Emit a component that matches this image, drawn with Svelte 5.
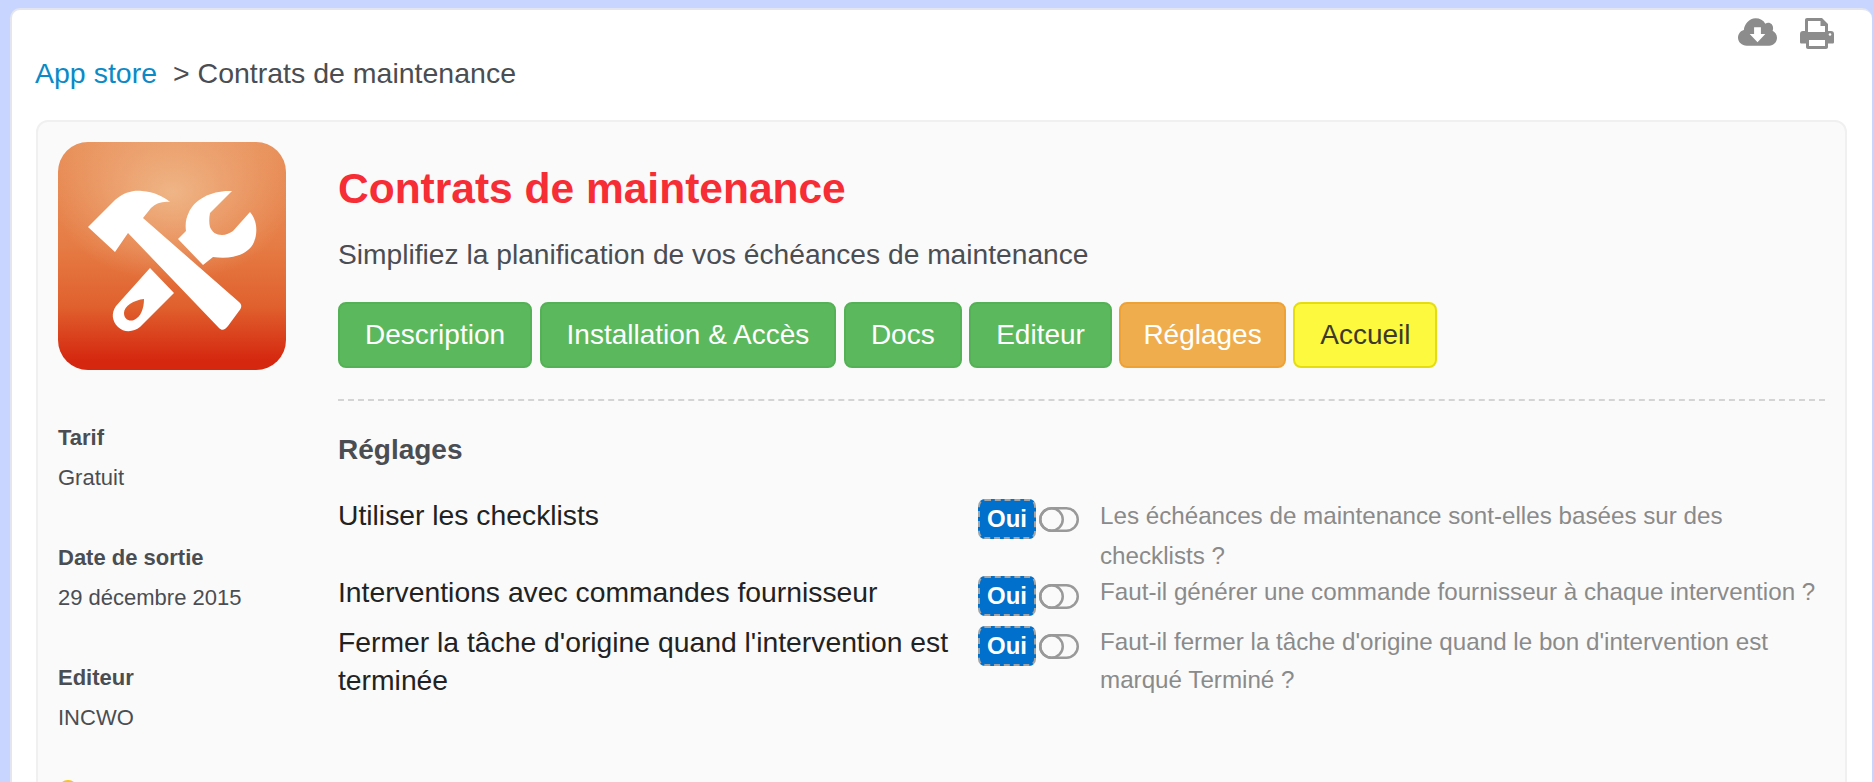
<script>
  const buttons = [
    { label: 'Description', kind: 'green' },
    { label: 'Installation & Accès', kind: 'green' },
    { label: 'Docs', kind: 'green' },
    { label: 'Editeur', kind: 'green' },
    { label: 'Réglages', kind: 'orange' },
    { label: 'Accueil', kind: 'yellow' }
  ];

  const meta = [
    { title: 'Tarif', value: 'Gratuit' },
    { title: 'Date de sortie', value: '29 décembre 2015' },
    { title: 'Editeur', value: 'INCWO' }
  ];

  const settings = [
    {
      label: 'Utiliser les checklists',
      help: 'Les échéances de maintenance sont-elles basées sur des checklists ?'
    },
    {
      label: 'Interventions avec commandes fournisseur',
      help: 'Faut-il générer une commande fournisseur à chaque intervention ?'
    },
    {
      label: "Fermer la tâche d'origine quand l'intervention est terminée",
      help: "Faut-il fermer la tâche d'origine quand le bon d'intervention est marqué Terminé ?"
    }
  ];
</script>

<div class="page">
  <div class="sheet">
    <div class="tools">
      <svg class="cloud" width="39" height="28" viewBox="0 0 40 28" aria-hidden="true">
        <path d="M9 28C4 28 0 24.500 0 20C0 16 2.500 13 6 12C6.500 6 11.500 0 18 0C22.500 0 26 2 28 5.500C29 5 30 4.500 31 4.500C34 4.500 36 7 36 10C36 11 35.800 12 35.500 12.800C38 14 40 16.800 40 20C40 24.500 36.500 28 32 28Z" fill="#8c8c8c"/>
        <path d="M16.500 9H23.500V16H28L20 24.500L12 16H16.500Z" fill="#fff"/>
      </svg>
      <svg class="printer" width="34" height="31" viewBox="0 0 34 31" aria-hidden="true">
        <path fill-rule="evenodd" fill="#8c8c8c" d="M7 0H22L28 6V13H31C33 13 34 14 34 16V24C34 25 33.400 25.500 32.500 25.500H28V29C28 30.300 27.200 31 26 31H8C6.800 31 6 30.300 6 29V25.500H1.500C0.600 25.500 0 25 0 24V16C0 14 1 13 3 13H5V2C5 0.800 5.800 0 7 0ZM8 3V14H25V8H20.500V3ZM9 22V28H25V22Z"/>
        <circle cx="30" cy="16.500" r="1.300" fill="#fff"/>
      </svg>
    </div>

    <div class="crumbs"><a href="#top">App store</a><span>&gt; Contrats de maintenance</span></div>

    <div class="card">
      <aside class="side">
        <div class="app-icon">
          <svg width="228" height="228" viewBox="0 0 228 228" aria-hidden="true">
            <path fill="#fff" d="M30 85L57 58C66 50 76 48 84 49C96 50 105 54 112 60C105 59 98 61 93 66L85 76L181 160C184 163 184 165 181 169L170 184C167 188 164 189 161 186L70 91L57 110Z"/>
            <path fill="#fff" d="M120 97L128 89C127 82 128 76 131 70C137 57 154 48 174 49L152 71C151 76 151 81 152 85C154 90 158 93 164 93C168 93 172 91 175 89L192 70C199 78 200 90 196 100C191 112 175 118 155 115L145 123Z"/>
            <path fill="#fff" fill-rule="evenodd" d="M92 126L116 151L82 185C76 190 66 191 60 185C54 179 53 171 58 164ZM86 157C76 158 66 164 66 171C66 177 71 180 76 178C83 175 86 166 86 157Z"/>
          </svg>
        </div>
        {#each meta as item}
          <div class="meta">
            <strong>{item.title}</strong>
            <span>{item.value}</span>
          </div>
        {/each}
        <div class="dot"></div>
      </aside>

      <main class="content">
        <h1>Contrats de maintenance</h1>
        <p class="tagline">Simplifiez la planification de vos échéances de maintenance</p>
        <div class="buttons">
          {#each buttons as b}
            <button class={b.kind}>{b.label}</button>
          {/each}
        </div>
        <div class="rule"></div>
        <h2>Réglages</h2>
        <div class="rows">
          {#each settings as s}
            <div class="row">
              <div class="label">{s.label}</div>
              <div class="control">
                <span class="oui">Oui</span>
                <svg class="toggle" width="40" height="25" viewBox="0 0 40 25" aria-hidden="true">
                  <rect x="1.250" y="1.250" width="37.500" height="22.500" rx="11.250" fill="none" stroke="#999" stroke-width="2.500"/>
                  <circle cx="12.500" cy="12.500" r="11.250" fill="none" stroke="#999" stroke-width="2.500"/>
                </svg>
              </div>
              <div class="help">{s.help}</div>
            </div>
          {/each}
        </div>
      </main>
    </div>
  </div>
</div>

<style>
  :global(body) {
    margin: 0;
    background: #c8d6ff;
    overflow: hidden;
  }

  .page {
    height: 782px;
    padding: 8px 2px 0 10px;
    box-sizing: border-box;
    font-family: "Liberation Sans", Arial, sans-serif;
    color: #4a4d52;
  }

  .sheet {
    height: 800px;
    background: #fff;
    border: 2px solid #e3e6ee;
    border-bottom: 0;
    border-right: 0;
    border-radius: 10px 10px 0 0;
    box-sizing: border-box;
    padding: 0 25px 0 24px;
  }

  .tools {
    display: flex;
    justify-content: flex-end;
    align-items: flex-start;
    gap: 23px;
    height: 47px;
    padding: 8px 13px 0 0;
    box-sizing: border-box;
  }

  .crumbs {
    display: flex;
    gap: 16px;
    font-size: 28.500px;
    line-height: 32px;
    height: 63px;
    margin-left: -1px;
  }

  .crumbs a {
    color: #0a8ac6;
    text-decoration: none;
  }

  .card {
    display: flex;
    height: 700px;
    background: #fafafa;
    border: 2px solid #f0f0f0;
    border-radius: 12px;
    box-sizing: border-box;
    padding: 20px 20px 0 20px;
  }

  .side {
    width: 280px;
    flex: none;
  }

  .app-icon {
    width: 228px;
    height: 228px;
    border-radius: 30px;
    overflow: hidden;
    margin-bottom: 56px;
    background:
      radial-gradient(ellipse 120px 90px at 50% 22%, rgba(240, 186, 140, 0.9), rgba(240, 186, 140, 0) 100%),
      linear-gradient(180deg, #e9925c 0%, #e67c45 45%, #e0612e 72%, #d5270f 96%);
  }

  .app-icon svg {
    display: block;
  }

  .meta {
    display: flex;
    flex-direction: column;
    gap: 16px;
    margin-bottom: 56px;
    font-size: 22px;
    line-height: 24px;
  }

  .dot {
    width: 20px;
    height: 20px;
    margin-top: -6px;
    border-radius: 50%;
    background: #f5c518;
  }

  .content {
    flex: 1;
    min-width: 0;
  }

  h1 {
    margin: 23px 0 0;
    font-size: 42.500px;
    line-height: 48px;
    font-weight: 700;
    color: #f72d36;
  }

  .tagline {
    margin: 24px 0 0;
    font-size: 28.200px;
    line-height: 34px;
  }

  .buttons {
    display: flex;
    gap: 7.500px;
    margin-top: 31px;
  }

  button {
    height: 66px;
    padding: 0 25px;
    font: 28px "Liberation Sans", Arial, sans-serif;
    border: 2px solid;
    border-radius: 8px;
    color: #fff;
  }

  .green {
    background: #5cb85c;
    border-color: #55b155;
  }

  .orange {
    padding: 0 22px;
    background: #f0ad4e;
    border-color: #eea236;
  }

  .yellow {
    background: #fdf93f;
    border-color: #e6dd10;
    color: #3c3a2a;
  }

  .rule {
    margin-top: 31px;
    border-top: 2px dashed #d4d4d4;
  }

  h2 {
    margin: 33px 0 0;
    font-size: 28px;
    line-height: 32px;
    font-weight: 700;
  }

  .rows {
    margin-top: 30px;
  }

  .row {
    display: grid;
    grid-template-columns: 640px 122px 1fr;
    align-items: start;
    min-height: 50px;
  }

  .row:first-child {
    height: 77px;
  }

  .row:first-child .help {
    line-height: 40px;
  }

  .label {
    font-size: 28.300px;
    line-height: 38px;
    color: #222;
  }

  .control {
    display: flex;
    align-items: center;
    gap: 3px;
    height: 40px;
    margin-top: 3px;
  }

  .oui {
    display: flex;
    align-items: center;
    justify-content: center;
    width: 58px;
    height: 40px;
    background: #0070cc;
    border: 2px dashed #a5a5a5;
    border-radius: 7px;
    box-sizing: border-box;
    color: #fff;
    font-size: 24px;
    font-weight: 700;
  }

  .toggle {
    flex: none;
  }

  .help {
    font-size: 24.200px;
    line-height: 38px;
    color: #8a8a8a;
  }
</style>
